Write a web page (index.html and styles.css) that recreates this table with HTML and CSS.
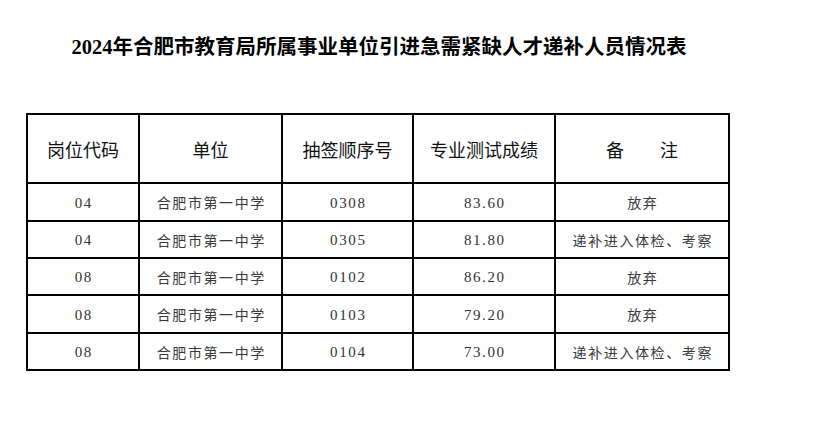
FILE: index.html
```html
<!DOCTYPE html>
<html lang="zh-CN">
<head>
<meta charset="utf-8">
<title>2024年合肥市教育局所属事业单位引进急需紧缺人才递补人员情况表</title>
<link rel="stylesheet" href="styles.css">
</head>
<body>
<div class="page">
  <h1 class="title">2024年合肥市教育局所属事业单位引进急需紧缺人才递补人员情况表</h1>
  <div class="table">
    <div class="cell head">岗位代码</div>
    <div class="cell head">单位</div>
    <div class="cell head">抽签顺序号</div>
    <div class="cell head">专业测试成绩</div>
    <div class="cell head">备　　注</div>

    <div class="cell num">04</div>
    <div class="cell cjk">合肥市第一中学</div>
    <div class="cell num">0308</div>
    <div class="cell num">83.60</div>
    <div class="cell cjk">放弃</div>

    <div class="cell num">04</div>
    <div class="cell cjk">合肥市第一中学</div>
    <div class="cell num">0305</div>
    <div class="cell num">81.80</div>
    <div class="cell cjk">递补进入体检、考察</div>

    <div class="cell num">08</div>
    <div class="cell cjk">合肥市第一中学</div>
    <div class="cell num">0102</div>
    <div class="cell num">86.20</div>
    <div class="cell cjk">放弃</div>

    <div class="cell num">08</div>
    <div class="cell cjk">合肥市第一中学</div>
    <div class="cell num">0103</div>
    <div class="cell num">79.20</div>
    <div class="cell cjk">放弃</div>

    <div class="cell num">08</div>
    <div class="cell cjk">合肥市第一中学</div>
    <div class="cell num">0104</div>
    <div class="cell num">73.00</div>
    <div class="cell cjk">递补进入体检、考察</div>
  </div>
</div>
</body>
</html>
```
FILE: styles.css
```css
html, body {
  margin: 0;
  padding: 0;
  background: #ffffff;
}

.page {
  width: 704px;
  margin-left: 26px;
  padding-top: 33px;
}

.title {
  margin: 0 0 52px 0;
  text-align: center;
  font-family: "Liberation Serif", "Noto Sans CJK SC", serif;
  font-weight: bold;
  font-size: 20.5px;
  line-height: 28px;
  color: #000;
  padding-left: 2px;
}

.table {
  display: grid;
  grid-template-columns: 112px 143px 131px 142px 174px;
  grid-template-rows: 69px 38px 37px 37px 38px 37px;
  border-left: 2px solid #000;
  border-top: 2px solid #000;
  width: 702px;
}

.cell {
  box-sizing: border-box;
  border-right: 2px solid #000;
  border-bottom: 2px solid #000;
  display: flex;
  align-items: center;
  justify-content: center;
  white-space: nowrap;
}

.head {
  font-family: "Noto Sans CJK SC", sans-serif;
  font-size: 18px;
  color: #111;
  padding-top: 1px;
}

.num {
  font-family: "Liberation Serif", serif;
  font-size: 15px;
  letter-spacing: 1.6px;
  color: #333;
  padding-top: 2px;
  padding-left: 1.6px;
}

.cjk {
  font-family: "Noto Sans CJK SC", sans-serif;
  font-size: 14px;
  letter-spacing: 1.6px;
  color: #3a3a3a;
  padding-left: 1.6px;
}
```
